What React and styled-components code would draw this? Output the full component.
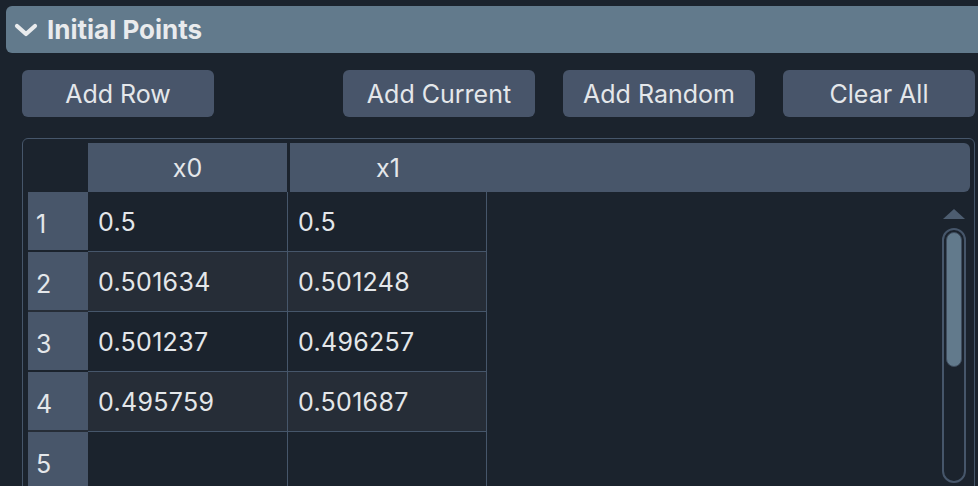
import React from 'react';
import styled, { createGlobalStyle } from 'styled-components';

const GlobalStyle = createGlobalStyle`
  html, body {
    margin: 0;
    padding: 0;
    height: 486px;
    overflow: hidden;
    background: #1b232d;
  }
  body {
    font-family: Inter, "Noto Sans", sans-serif;
    color: #e4e7ea;
  }
`;

const Panel = styled.div`
  display: flex;
  flex-direction: column;
  padding: 6px 0 0 6px;
`;

const SectionHeader = styled.div`
  display: flex;
  align-items: center;
  gap: 9px;
  height: 47px;
  padding-left: 8px;
  background: #627a8c;
  border-radius: 6px 0 0 6px;
  font-size: 26px;
  font-weight: 700;
  color: #e9ebed;
`;

const Content = styled.div`
  display: flex;
  flex-direction: column;
  gap: 21px;
  padding: 17px 3px 0 16px;
`;

const Toolbar = styled.div`
  display: flex;
  justify-content: space-between;
`;

const ButtonGroup = styled.div`
  display: flex;
  gap: 28px;
`;

const Button = styled.button`
  width: 192px;
  height: 47px;
  border: none;
  border-radius: 6px;
  background: #48556a;
  color: #e4e7ea;
  font-family: inherit;
  font-size: 25px;
  padding: 0;
`;

const TableFrame = styled.div`
  display: flex;
  flex-direction: column;
  height: 370px;
  padding: 4px 4px 0 5px;
  border: 1px solid #46566a;
  border-radius: 6px;
`;

const HeadRow = styled.div`
  display: flex;
  height: 49px;
`;

const Corner = styled.div`
  width: 60px;
`;

const HeadCell = styled.div`
  display: flex;
  align-items: center;
  justify-content: center;
  width: ${p => p.$w}px;
  margin-right: ${p => p.$gap || 0}px;
  background: #48566a;
  font-size: 25px;
`;

const HeadFill = styled.div`
  flex: 1;
  background: #48566a;
  border-radius: 0 6px 6px 0;
`;

const BodyArea = styled.div`
  display: flex;
  flex: 1;
  min-height: 0;
`;

const Grid = styled.div`
  display: flex;
  flex-direction: column;
`;

const Row = styled.div`
  display: flex;
  height: 60px;
  background: ${p => (p.$alt ? '#262d37' : 'transparent')};
`;

const RowHead = styled.div`
  display: flex;
  align-items: center;
  width: 60px;
  height: 58px;
  padding: 6px 0 0 8px;
  box-sizing: border-box;
  background: #48566a;
  font-size: 25px;
`;

const Cell = styled.div`
  display: flex;
  align-items: center;
  width: ${p => p.$w}px;
  padding-left: 10px;
  box-sizing: border-box;
  border-right: 1px solid #46566a;
  border-bottom: 1px solid #46566a;
  font-size: 25px;
  letter-spacing: 0.3px;
`;

const ScrollColumn = styled.div`
  display: flex;
  flex-direction: column;
  align-items: center;
  gap: 9px;
  width: 24px;
  margin: 17px 4px 0 auto;
`;

const ScrollTrack = styled.div`
  display: flex;
  flex-direction: column;
  width: 24px;
  height: 255px;
  padding: 2px;
  box-sizing: border-box;
  border: 2px solid #46566a;
  border-radius: 12px;
`;

const ScrollThumb = styled.div`
  height: 133px;
  border: 1px solid #3e4c5d;
  border-radius: 9px;
  background: #627a8c;
`;

const Chevron = () => (
  <svg width="24" height="14" viewBox="0 0 24 14">
    <polyline points="3,3 12,11 21,3" fill="none" stroke="#e9ebed" strokeWidth="4.2" strokeLinecap="round" strokeLinejoin="round" />
  </svg>
);

const UpArrow = () => (
  <svg width="22" height="10" viewBox="0 0 22 10">
    <polygon points="11,0 22,10 0,10" fill="#4d5d70" />
  </svg>
);

const points = [
  ['0.5', '0.5'],
  ['0.501634', '0.501248'],
  ['0.501237', '0.496257'],
  ['0.495759', '0.501687'],
  ['', ''],
];

export default function App() {
  return (
    <>
      <GlobalStyle />
      <Panel>
        <SectionHeader>
          <Chevron />
          Initial Points
        </SectionHeader>
        <Content>
          <Toolbar>
            <Button>Add Row</Button>
            <ButtonGroup>
              <Button>Add Current</Button>
              <Button>Add Random</Button>
              <Button>Clear All</Button>
            </ButtonGroup>
          </Toolbar>
          <TableFrame>
            <HeadRow>
              <Corner />
              <HeadCell $w={199} $gap={3}>x0</HeadCell>
              <HeadCell $w={196}>x1</HeadCell>
              <HeadFill />
            </HeadRow>
            <BodyArea>
              <Grid>
                {points.map((p, i) => (
                  <Row key={i} $alt={i % 2 === 1}>
                    <RowHead>{i + 1}</RowHead>
                    <Cell $w={200}>{p[0]}</Cell>
                    <Cell $w={199}>{p[1]}</Cell>
                  </Row>
                ))}
              </Grid>
              <ScrollColumn>
                <UpArrow />
                <ScrollTrack>
                  <ScrollThumb />
                </ScrollTrack>
              </ScrollColumn>
            </BodyArea>
          </TableFrame>
        </Content>
      </Panel>
    </>
  );
}
